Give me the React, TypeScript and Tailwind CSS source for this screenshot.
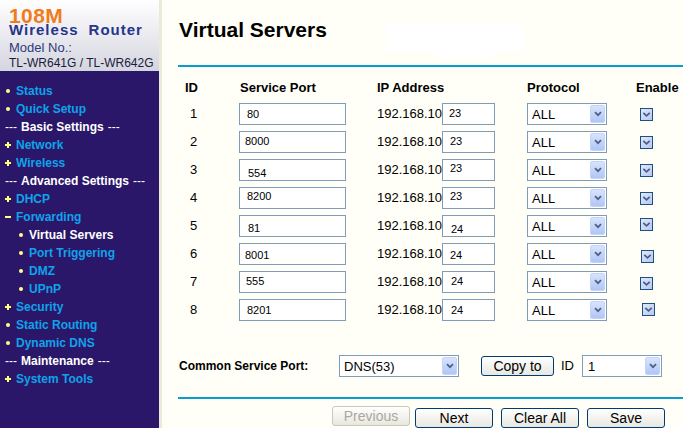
import React from "react";

type MenuKind = "dot" | "plus" | "minus" | "section" | "sub";

interface MenuItem {
  kind: MenuKind;
  label: string;
  active?: boolean;
}

const menu: MenuItem[] = [
  { kind: "dot", label: "Status" },
  { kind: "dot", label: "Quick Setup" },
  { kind: "section", label: "Basic Settings" },
  { kind: "plus", label: "Network" },
  { kind: "plus", label: "Wireless" },
  { kind: "section", label: "Advanced Settings" },
  { kind: "plus", label: "DHCP" },
  { kind: "minus", label: "Forwarding" },
  { kind: "sub", label: "Virtual Servers", active: true },
  { kind: "sub", label: "Port Triggering" },
  { kind: "sub", label: "DMZ" },
  { kind: "sub", label: "UPnP" },
  { kind: "plus", label: "Security" },
  { kind: "dot", label: "Static Routing" },
  { kind: "dot", label: "Dynamic DNS" },
  { kind: "section", label: "Maintenance" },
  { kind: "plus", label: "System Tools" },
];

// per-row nudges copy the uneven text placement of the original form
const rows = [
  { id: 1, port: "80", svc: "pl-[7px]", ip: "23", ipc: "pl-[6px] pb-[3px]", cb: "" },
  { id: 2, port: "8000", svc: "pl-[5px] pb-[2px]", ip: "23", ipc: "pl-[7px] pb-[2px]", cb: "" },
  { id: 3, port: "554", svc: "pl-[8px] pt-[5px]", ip: "23", ipc: "pl-[7px] pb-[5px]", cb: "" },
  { id: 4, port: "8200", svc: "pl-[7px] pb-[4px]", ip: "23", ipc: "pl-[7px] pb-[5px]", cb: "" },
  { id: 5, port: "81", svc: "pl-[8px] pt-[3px]", ip: "24", ipc: "pl-[8px] pt-[5px]", cb: "-translate-y-[2px]" },
  { id: 6, port: "8001", svc: "pl-[5px] pt-[1px]", ip: "24", ipc: "pl-[7px] pt-[1px]", cb: "translate-x-[1px] translate-y-[2px]" },
  { id: 7, port: "555", svc: "pl-[6px] pb-[3px]", ip: "24", ipc: "pl-[8px] pb-[3px]", cb: "translate-y-[1px]" },
  { id: 8, port: "8201", svc: "pl-[7px]", ip: "24", ipc: "pl-[8px]", cb: "translate-x-[2px] -translate-y-[1px]" },
];

function Chevron() {
  return (
    <svg width="8" height="6" viewBox="0 0 8 6">
      <path d="M1 1.2 L4 4.2 L7 1.2" fill="none" stroke="#4d6185" strokeWidth="1.8" />
    </svg>
  );
}

function Select({ value, width, pad }: { value: string; width: string; pad: string }) {
  return (
    <div
      className={`flex h-[22px] items-center justify-between border border-[#7f9db9] bg-white ${width}`}
    >
      <span className={`text-[13px] leading-none text-black ${pad}`}>{value}</span>
      <span className="mr-[1px] flex h-[18px] w-[15px] items-center justify-center rounded-[2px] border border-[#c3d3fb] bg-linear-to-b from-[#d8e4fd] to-[#b1c6f6]">
        <Chevron />
      </span>
    </div>
  );
}

function Checkbox({ className }: { className: string }) {
  return (
    <svg width="13" height="13" viewBox="0 0 13 13" className={className}>
      <defs>
        <linearGradient id="cbfill" x1="0" y1="0" x2="1" y2="1">
          <stop offset="0" stopColor="#e2eafb" />
          <stop offset="1" stopColor="#b4c6f2" />
        </linearGradient>
      </defs>
      <rect x="0.5" y="0.5" width="12" height="12" fill="url(#cbfill)" stroke="#1c5180" />
      <path d="M3.3 4.8 L6.5 7.8 L9.7 4.8" fill="none" stroke="#4b5f8a" strokeWidth="1.8" />
    </svg>
  );
}

function Button({ label, disabled, width }: { label: string; disabled?: boolean; width: string }) {
  return (
    <button
      type="button"
      className={`h-[20px] ${width} rounded-[3px] border bg-linear-to-b from-white to-[#e8e7e0] text-[14px] leading-none ${
        disabled ? "border-[#c9c7ba] text-[#aca899]" : "border-[#003c74] text-black"
      }`}
    >
      {label}
    </button>
  );
}

function MenuRow({ item }: { item: MenuItem }) {
  if (item.kind === "section") {
    return (
      <div className="flex h-[18px] items-center pl-[5px] text-[12px] text-white">
        <span>---</span>
        <span className="mx-[4px] font-bold">{item.label}</span>
        <span>---</span>
      </div>
    );
  }
  const text = item.active ? "text-white" : "text-[#0fa3ea]";
  return (
    <div className={`flex h-[18px] items-center text-[12px] font-bold ${text}`}>
      {item.kind === "dot" && (
        <span className="ml-[6px] mr-[6px] h-[4px] w-[4px] rounded-full bg-[#ffff8a]" />
      )}
      {item.kind === "sub" && (
        <span className="ml-[19px] mr-[6px] h-[4px] w-[4px] rounded-full bg-[#ffff8a]" />
      )}
      {item.kind === "plus" && (
        <svg width="6" height="6" viewBox="0 0 6 6" className="ml-[5px] mr-[5px]">
          <path d="M0 3 H6 M3 0 V6" stroke="#ffff80" strokeWidth="2" />
        </svg>
      )}
      {item.kind === "minus" && (
        <svg width="6" height="6" viewBox="0 0 6 6" className="ml-[5px] mr-[5px]">
          <path d="M0 3 H6" stroke="#ffff80" strokeWidth="2" />
        </svg>
      )}
      <span>{item.label}</span>
    </div>
  );
}

export default function App() {
  return (
    <div className="flex h-[428px] w-[683px] overflow-hidden font-['Liberation_Sans',Arial,sans-serif]">
      <aside className="flex w-[159px] shrink-0 flex-col bg-[#2a1769]">
        <div className="h-[71px] overflow-hidden bg-linear-to-b from-white to-[#d5d5e0] pl-[9px] pt-[7px]">
          <div className="text-[21px] font-bold leading-[17px] tracking-[0.4px] text-[#f07c1a]">108M</div>
          <div className="text-[15px] font-bold leading-[12px] tracking-[1px] text-[#24358a]">
            Wireless<span className="ml-[10px]">Router</span>
          </div>
          <div className="mt-[4px] text-[13px] leading-[16px] text-[#2f3a7e]">Model No.:</div>
          <div className="text-[12px] leading-[15px] text-[#1b1b3c]">TL-WR641G / TL-WR642G</div>
        </div>
        <nav className="pt-[11px]">
          {menu.map((item) => (
            <MenuRow key={item.label} item={item} />
          ))}
        </nav>
      </aside>

      <div className="w-[3px] shrink-0 bg-[#ece9d8]" />

      <main className="flex-1 bg-[#fffff7] pl-[16px]">
        <div className="flex h-[65px] items-start pt-[18px]">
          <h1 className="w-[208px] pl-[1px] text-[21px] font-bold leading-[24px] text-black">
            Virtual Servers
          </h1>
          <div className="mt-[5px] flex flex-col items-start">
            <div className="h-[28px] w-[138px] bg-white" />
            <div className="ml-[50px] h-[7px] w-[58px] bg-white" />
          </div>
        </div>
        <div className="h-[2px] bg-[#0a9bd0]" />

        <div className="mt-[11px] grid h-[18px] grid-cols-[61px_138px_150px_109px_1fr] items-center text-[13px] font-bold text-black">
          <span className="pl-[7px]">ID</span>
          <span className="pl-[1px]">Service Port</span>
          <span>IP Address</span>
          <span>Protocol</span>
          <span>Enable</span>
        </div>

        <div className="mt-[7px] flex flex-col gap-[6px]">
          {rows.map((r) => (
            <div
              key={r.id}
              className="grid h-[22px] grid-cols-[61px_138px_150px_109px_1fr] items-center text-[13px] text-black"
            >
              <span className="pl-[12px]">{r.id}</span>
              <input
                readOnly
                value={r.port}
                className={`h-[22px] w-[107px] border border-[#7f9db9] bg-white text-[11px] text-black outline-none ${r.svc}`}
              />
              <div className="flex items-center">
                <span className="w-[65px] shrink-0 whitespace-nowrap">192.168.10.</span>
                <input
                  readOnly
                  value={r.ip}
                  className={`h-[22px] w-[53px] shrink-0 border border-[#7f9db9] bg-white text-[11px] text-black outline-none ${r.ipc}`}
                />
              </div>
              <Select value="ALL" width="w-[80px]" pad="pl-[4px]" />
              <div className="pl-[4px]">
                <Checkbox className={r.cb} />
              </div>
            </div>
          ))}
        </div>

        <div className="mt-[34px] flex h-[22px] items-center">
          <span className="w-[161px] pl-[1px] text-[12px] font-bold text-black">Common Service Port:</span>
          <Select value="DNS(53)" width="w-[120px]" pad="pl-[4px]" />
          <div className="ml-[22px]">
            <Button label="Copy to" width="w-[73px]" />
          </div>
          <span className="ml-[7px] text-[13px] text-black">ID</span>
          <div className="ml-[8px]">
            <Select value="1" width="w-[80px]" pad="pl-[5px]" />
          </div>
        </div>

        <div className="mt-[20px] h-[2px] bg-[#0a9bd0]" />

        <div className="mt-[7px] flex pl-[154px]">
          <Button label="Previous" disabled width="w-[78px]" />
          <div className="ml-[5px]">
            <Button label="Next" width="w-[78px]" />
          </div>
          <div className="ml-[8px]">
            <Button label="Clear All" width="w-[78px]" />
          </div>
          <div className="ml-[8px]">
            <Button label="Save" width="w-[78px]" />
          </div>
        </div>
      </main>
    </div>
  );
}
